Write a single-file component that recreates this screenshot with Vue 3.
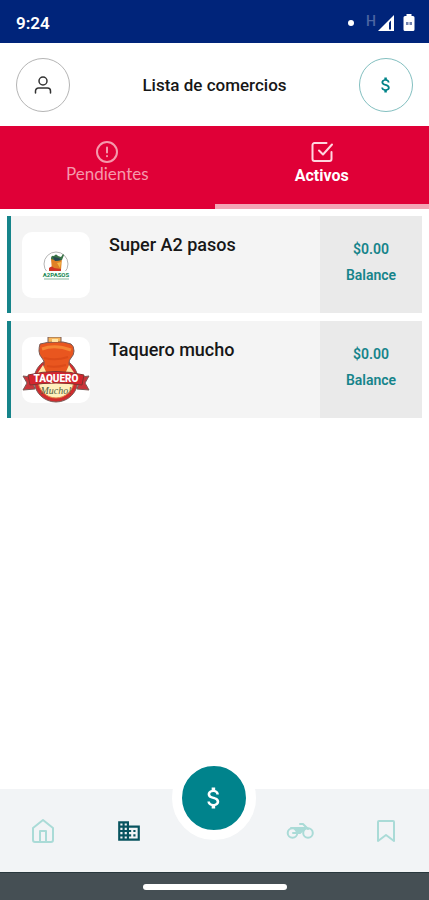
<script setup>
import { ref } from 'vue';

const activeTab = ref('activos');

const shops = [
    { id: 1, name: 'Super A2 pasos', balance: '$0.00', logo: 'super' },
    { id: 2, name: 'Taquero mucho', balance: '$0.00', logo: 'taquero' }
];

const dollarPath = 'M11.8 10.9c-2.27-.59-3-1.2-3-2.15 0-1.09 1.01-1.85 2.7-1.85 1.78 0 2.44.85 2.5 2.1h2.21c-.07-1.72-1.12-3.3-3.21-3.81V3h-3v2.16c-1.94.42-3.5 1.68-3.5 3.61 0 2.31 1.91 3.46 4.7 4.13 2.5.6 3 1.48 3 2.41 0 .69-.49 1.79-2.7 1.79-2.06 0-2.87-.92-2.98-2.1h-2.2c.12 2.19 1.76 3.42 3.68 3.83V21h3v-2.15c1.95-.37 3.5-1.5 3.5-3.55 0-2.84-2.43-3.81-4.7-4.4z';
</script>

<template>
    <div class="app-screen">
        <div class="status-bar">
            <span class="clock">9:24</span>
            <div class="status-icons">
                <span class="dot"></span>
                <span class="network">H</span>
                <svg class="signal" width="16" height="16" viewBox="0 0 16 16" aria-hidden="true">
                    <path d="M0 16 16 0v16z" fill="#fff" />
                    <path d="M11 7.500v7h2v-9z" fill="#00247a" />
                </svg>
                <svg width="12" height="18" viewBox="0 0 12 18" aria-hidden="true">
                    <path d="M3.500 0h5v2H10a1.500 1.500 0 0 1 1.500 1.500v12A1.500 1.500 0 0 1 10 17H2a1.500 1.500 0 0 1-1.500-1.500v-12A1.500 1.500 0 0 1 2 2h1.500z" fill="#fff" />
                    <path d="M3 8h2.500v3H3zm3.500 0H9v3H6.500z" fill="#7182ae" />
                </svg>
            </div>
        </div>

        <header class="top-bar">
            <button class="round-btn" type="button" aria-label="Perfil">
                <svg width="20" height="20" viewBox="0 0 20 20" fill="none" stroke="#333" stroke-width="1.500" stroke-linecap="round" aria-hidden="true">
                    <circle cx="10" cy="6" r="4" />
                    <path d="M2.500 18v-2a3 3 0 0 1 3-3h9a3 3 0 0 1 3 3v2" />
                </svg>
            </button>
            <h1>Lista de comercios</h1>
            <button class="round-btn teal" type="button" aria-label="Saldo">
                <svg width="20" height="20" viewBox="0 0 24 24" aria-hidden="true">
                    <path :d="dollarPath" fill="currentColor" />
                </svg>
            </button>
        </header>

        <div class="tabs" role="tablist">
            <button type="button" role="tab" :aria-selected="activeTab === 'pendientes'"
                :class="['tab', { active: activeTab === 'pendientes' }]" @click="activeTab = 'pendientes'">
                <svg width="24" height="24" viewBox="0 0 24 24" fill="none" stroke="currentColor" stroke-width="2" stroke-linecap="round" aria-hidden="true">
                    <circle cx="12" cy="12" r="10" />
                    <path d="M12 7.500v5M12 16v.2" />
                </svg>
                <span>Pendientes</span>
            </button>
            <button type="button" role="tab" :aria-selected="activeTab === 'activos'"
                :class="['tab', { active: activeTab === 'activos' }]" @click="activeTab = 'activos'">
                <svg width="24" height="24" viewBox="0 0 24 24" fill="none" stroke="currentColor" stroke-width="2" stroke-linecap="round" stroke-linejoin="round" aria-hidden="true">
                    <path d="m9 10.500 4 4 9-10" />
                    <path d="M21.500 12v7a2 2 0 0 1-2 2h-15a2 2 0 0 1-2-2V5a2 2 0 0 1 2-2h12" />
                </svg>
                <span>Activos</span>
            </button>
        </div>

        <main class="shop-list">
            <article v-for="shop in shops" :key="shop.id" class="shop">
                <div class="logo">
                    <svg v-if="shop.logo === 'super'" viewBox="0 0 68 68" aria-hidden="true">
                        <circle cx="34" cy="32" r="12" fill="#fff" stroke="#b5b5b5" stroke-width="1" />
                        <path d="m29 27 11-1-1 12q-4 2-9 0z" fill="#df8125" />
                        <path d="M29 27q0-4 3-3 2-3 4 0l3 1 2-3 1 1-2 5-5 1z" fill="#397247" />
                        <path d="m31 25 2 4 6-1-2-2z" fill="#284653" />
                        <path d="m35 31 4-1-1 6z" fill="#f4b947" />
                        <path d="M27 36q3-3 5 0l7 1v2H27z" fill="#cf3425" />
                        <path d="M22 39h25v7H22z" fill="#f8fffa" />
                        <text x="34" y="45" text-anchor="middle" class="super-text">A2PASOS</text>
                        <path d="M22 47h25" stroke="#86b79d" />
                    </svg>
                    <svg v-else viewBox="0 0 68 68" aria-hidden="true">
                        <g stroke="#7b5a55" stroke-width="1" stroke-linejoin="round">
                            <path d="m9 40-8-1 4 7-4 7 12-1zM59 40l8-1-4 7 4 7-12-1z" fill="#c9353a" />
                            <circle cx="34" cy="43" r="22" fill="#d02c2e" />
                            <circle cx="34" cy="43" r="18" fill="#fff0bd" stroke="#e27b3c" />
                            <path d="M26 7V0h13v7z" fill="#f7b65c" />
                            <path d="M18 7q7-2 15-2 8-1 16 2 3 2 3 7 0 4-3 7-2 2-2 5 1 5 1 12H20q0-6 2-10 1-4-2-7-3-3-3-7 0-4 1-7z" fill="#e9561f" />
                        </g>
                        <path d="M20 12q13-5 29 1" fill="none" stroke="#f58534" stroke-width="3" />
                        <path d="M22 21q12 3 24-1M25 29q8 2 19-1" fill="none" stroke="#dc4b19" stroke-width="2" />
                        <path d="M30 2h6v3h-6z" fill="#ffe3a4" />
                        <path d="m15 37 6-9 4 9zM53 37l-6-9-4 9z" fill="#ffe5a2" />
                        <path d="M6 38q28-7 56 0l-2 10q-26-4-52 0z" fill="#d4252e" stroke="#83332e" />
                        <text x="34" y="45" text-anchor="middle" class="taquero-text">TAQUERO</text>
                        <text x="34" y="57" text-anchor="middle" class="mucho-text">Mucho!</text>
                    </svg>
                </div>
                <h2>{{ shop.name }}</h2>
                <div class="balance">
                    <span>{{ shop.balance }}</span>
                    <span>Balance</span>
                </div>
            </article>
        </main>

        <nav class="bottom-nav">
            <a href="#inicio" aria-label="Inicio">
                <svg width="26" height="26" viewBox="0 0 26 26" fill="none" stroke="currentColor" stroke-width="2" stroke-linejoin="round" aria-hidden="true">
                    <path d="M3 10 13 2l10 8v12a2 2 0 0 1-2 2H5a2 2 0 0 1-2-2z" />
                    <path d="M10 24V13h6v11" />
                </svg>
            </a>
            <a href="#comercios" class="current" aria-label="Comercios">
                <svg width="26" height="26" viewBox="0 0 24 24" fill="currentColor" aria-hidden="true">
                    <path d="M12 7V3H2v18h20V7H12zM6 19H4v-2h2v2zm0-4H4v-2h2v2zm0-4H4V9h2v2zm0-4H4V5h2v2zm4 12H8v-2h2v2zm0-4H8v-2h2v2zm0-4H8V9h2v2zm0-4H8V5h2v2zm10 12h-8v-2h2v-2h-2v-2h2v-2h-2V9h8v10zm-2-8h-2v2h2v-2zm0 4h-2v2h2v-2z" />
                </svg>
            </a>
            <div class="fab-slot">
                <button class="fab" type="button" aria-label="Cobrar">
                    <svg width="28" height="28" viewBox="0 0 24 24" aria-hidden="true">
                        <path :d="dollarPath" fill="currentColor" />
                    </svg>
                </button>
            </div>
            <a href="#repartos" aria-label="Repartos">
                <svg width="28" height="26" viewBox="0 0 28 26" fill="none" stroke="currentColor" stroke-width="2" stroke-linecap="round" stroke-linejoin="round" aria-hidden="true">
                    <circle cx="6.500" cy="15" r="4.800" />
                    <circle cx="22" cy="15" r="4.800" />
                    <path d="M14 6h3l5 5" />
                    <path d="M5 10h14l-5 5H7" />
                    <path d="m9 11 9-1-4 4h-3z" fill="currentColor" />
                </svg>
            </a>
            <a href="#guardados" aria-label="Guardados">
                <svg width="26" height="26" viewBox="0 0 26 26" fill="none" stroke="currentColor" stroke-width="2" stroke-linejoin="round" aria-hidden="true">
                    <path d="M5 23V4a1 1 0 0 1 1-1h14a1 1 0 0 1 1 1v19l-8-6z" />
                </svg>
            </a>
        </nav>

        <div class="system-bar">
            <span class="handle"></span>
        </div>
    </div>
</template>

<style>
body {
    margin: 0;
    background: #fff;
}
</style>

<style scoped>
.app-screen {
    min-height: 100vh;
    display: flex;
    flex-direction: column;
    background: #fff;
    color: #171717;
    font-family: Roboto, "Liberation Sans", sans-serif;
}

button {
    padding: 0;
    border: 0;
    font-family: inherit;
    cursor: pointer;
}

svg {
    display: block;
}

h1,
h2 {
    margin: 0;
    font-weight: 600;
}

.status-bar {
    height: 43px;
    box-sizing: border-box;
    padding: 2px 14px 0 16px;
    display: flex;
    align-items: center;
    justify-content: space-between;
    background: #00247a;
    color: #fff;
}

.clock {
    font-size: 17px;
    font-weight: 600;
}

.status-icons {
    display: flex;
    align-items: center;
}

.dot {
    width: 6px;
    height: 6px;
    margin-right: 12px;
    border-radius: 50%;
    background: #fff;
}

.network {
    align-self: flex-start;
    color: #4d66a2;
    font-size: 14px;
    font-weight: 500;
    line-height: 14px;
}

.signal {
    margin: 0 9px 0 2px;
}

.top-bar {
    height: 83px;
    box-sizing: border-box;
    padding: 0 16px;
    display: flex;
    align-items: center;
    justify-content: space-between;
}

.top-bar h1 {
    font-size: 17px;
    font-weight: 500;
}

.round-btn {
    width: 54px;
    height: 54px;
    display: flex;
    align-items: center;
    justify-content: center;
    border: 1px solid #b5b5b5;
    border-radius: 50%;
    background: #fff;
}

.round-btn.teal {
    border-color: #83bfc0;
    color: #008388;
}

.tabs {
    height: 83px;
    display: flex;
    background: #e00037;
}

.tab {
    flex: 1;
    box-sizing: border-box;
    padding-top: 14px;
    display: flex;
    flex-direction: column;
    align-items: center;
    justify-content: flex-start;
    border-bottom: 5px solid transparent;
    background: transparent;
    color: #f599ac;
    font-family: Lato, Roboto, sans-serif;
    font-size: 17px;
    line-height: 20px;
}

.tab.active {
    border-bottom-color: #f3a4b5;
    color: #fff;
    font-family: Roboto, "Liberation Sans", sans-serif;
    font-size: 16px;
    font-weight: 700;
    line-height: 24px;
}

.tab.active svg {
    color: #ffd6df;
}

.shop-list {
    flex: 1;
    padding: 7px;
    display: flex;
    flex-direction: column;
    gap: 8px;
}

.shop {
    min-height: 97px;
    display: flex;
    border-left: 4px solid #16848a;
    background: #f4f4f4;
}

.logo {
    width: 68px;
    height: 66px;
    margin: 16px 19px 0 11px;
    border-radius: 10px;
    background: #fff;
}

.logo svg {
    width: 68px;
    height: 68px;
}

.super-text {
    fill: #168451;
    font-size: 6px;
    font-weight: 700;
}

.taquero-text {
    fill: #fff;
    font-size: 10px;
    font-weight: 900;
}

.mucho-text {
    fill: #53613f;
    font-family: "Liberation Serif", serif;
    font-size: 10px;
    font-style: italic;
}

.shop h2 {
    flex: 1;
    padding-top: 18px;
    font-size: 18px;
    font-weight: 500;
    line-height: 22px;
}

.balance {
    width: 102px;
    padding-top: 20px;
    display: flex;
    flex-direction: column;
    align-items: center;
    background: #eaeaea;
    color: #16848a;
    font-size: 14px;
    font-weight: 600;
    line-height: 26px;
}

.bottom-nav {
    height: 83px;
    display: grid;
    grid-template-columns: repeat(5, 1fr);
    align-items: center;
    justify-items: center;
    background: #f2f4f6;
}

.bottom-nav a {
    color: #aadbd7;
}

.bottom-nav .current {
    color: #08535f;
}

.fab-slot {
    align-self: start;
    position: relative;
    width: 84px;
    height: 51px;
}

.fab {
    position: absolute;
    left: 0;
    bottom: 0;
    width: 84px;
    height: 84px;
    display: flex;
    align-items: center;
    justify-content: center;
    border: 10px solid #fff;
    border-radius: 50%;
    background: #00838c;
    color: #fff;
}

.system-bar {
    height: 28px;
    box-sizing: border-box;
    display: flex;
    align-items: center;
    justify-content: center;
    border-top: 1px solid #29383d;
    background: #454f54;
}

.handle {
    width: 144px;
    height: 6px;
    border-radius: 3px;
    background: #fff;
}
</style>
